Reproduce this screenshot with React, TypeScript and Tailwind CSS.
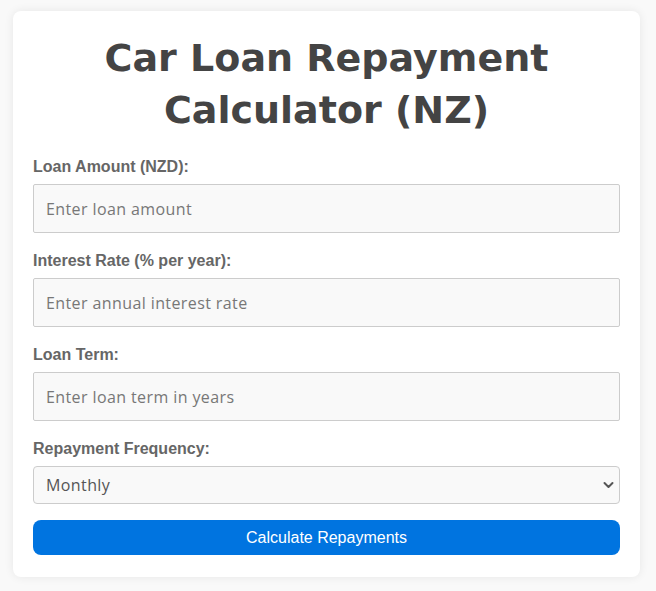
// Car loan repayment calculator card (NZ)
const LABEL = "block mb-2 text-base font-bold leading-[18px] text-[#666] font-['Liberation_Sans',Arial,sans-serif]";
const FIELD =
  "block w-full h-[49px] px-3 border border-[#ccc] rounded-[2px] bg-[#f9f9f9] text-base tracking-[0.4px] text-[#555] placeholder:text-[#777] font-['Open_Sans',sans-serif] outline-none";

function Field({ label, placeholder }: { label: string; placeholder: string }) {
  return (
    <div className="mb-[19px]">
      <label className={LABEL}>{label}</label>
      <input type="number" placeholder={placeholder} className={FIELD} />
    </div>
  );
}

export default function App() {
  return (
    <div className="min-h-screen bg-[#f9f9f9] pt-[11px] pb-4">
      <div className="ml-[13px] w-[627px] rounded-lg bg-white px-5 pt-[21px] pb-[22px] shadow-[0_0_10px_rgba(0,0,0,0.08)]">
        <h1 className="mb-[22px] text-center text-[38px] font-bold leading-[52px] text-[#444] font-['DejaVu_Sans',sans-serif]">
          Car Loan Repayment Calculator (NZ)
        </h1>

        <Field label="Loan Amount (NZD):" placeholder="Enter loan amount" />
        <Field label="Interest Rate (% per year):" placeholder="Enter annual interest rate" />
        <Field label="Loan Term:" placeholder="Enter loan term in years" />

        <div className="mb-4">
          <label className={LABEL}>Repayment Frequency:</label>
          <div className="relative">
            <select className="block h-[38px] w-full appearance-none rounded border border-[#ccc] bg-[#f9f9f9] px-3 text-base tracking-[0.4px] text-[#555] font-['Open_Sans',sans-serif] outline-none">
              <option>Monthly</option>
              <option>Fortnightly</option>
              <option>Weekly</option>
            </select>
            <svg
              className="pointer-events-none absolute right-[6px] top-1/2 -translate-y-1/2"
              width="11"
              height="7"
              viewBox="0 0 11 7"
              fill="none"
            >
              <path d="M1.5 1.5 5.5 5.5 9.5 1.5" stroke="#555" strokeWidth="2" strokeLinecap="round" strokeLinejoin="round" />
            </svg>
          </div>
        </div>

        <button className="block h-[35px] w-full rounded-lg bg-[#0074e0] text-base text-white font-['Liberation_Sans',Arial,sans-serif]">
          Calculate Repayments
        </button>
      </div>
    </div>
  );
}
